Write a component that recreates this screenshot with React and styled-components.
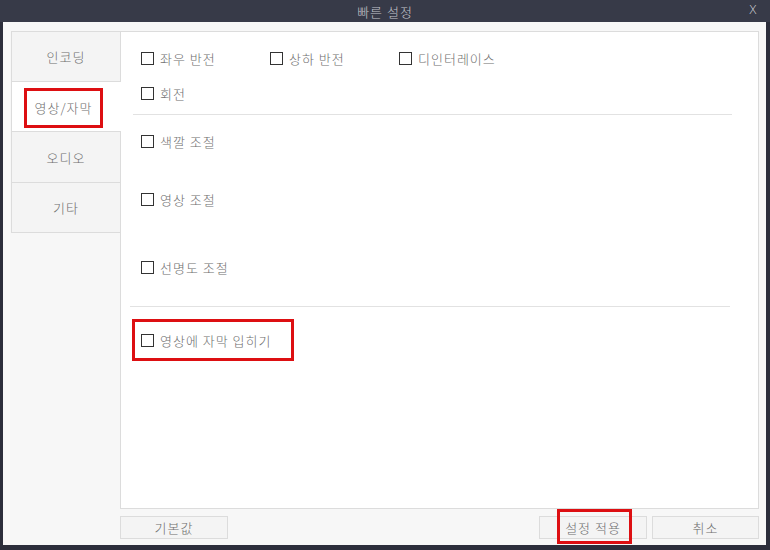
import React from "react";
import styled, { createGlobalStyle } from "styled-components";

const Global = createGlobalStyle`
  html, body { margin: 0; padding: 0; background: #2c2e3b; }
  body { font-family: "Noto Sans CJK KR", "Noto Sans", sans-serif; }
  * { box-sizing: border-box; }
`;

const Window = styled.div`
  width: 770px;
  height: 550px;
  background: #2c2e3b;
  display: flex;
  flex-direction: column;
`;

const TitleBar = styled.div`
  height: 22px;
  flex: none;
  background: #373a48;
  position: relative;
  display: flex;
  align-items: center;
  justify-content: center;
  color: #c4c5cc;
  font-size: 13px;
  font-weight: 300;
  letter-spacing: 1px;
`;

const CloseBtn = styled.span`
  position: absolute;
  right: 12px;
  top: 3px;
  font-family: "DejaVu Sans", sans-serif;
  font-size: 12px;
  color: #d6d7dc;
`;

const Body = styled.div`
  flex: 1;
  margin: 0 4px 5px 3px;
  background: #f7f7f7;
  padding: 9px 7px 6px 8px;
  display: flex;
  flex-direction: column;
`;

const Main = styled.div`
  height: 478px;
  display: flex;
`;

const Sidebar = styled.div`
  width: 109px;
  flex: none;
  display: flex;
  flex-direction: column;
`;

const Tab = styled.div`
  height: ${(p) => (p.$h ? p.$h : 50)}px;
  border: 1px solid #dcdcdc;
  border-bottom: ${(p) => (p.$last ? "1px solid #dcdcdc" : "none")};
  border-right: none;
  background: ${(p) => (p.$active ? "#ffffff" : "#f4f4f4")};
  margin-right: ${(p) => (p.$active ? "-1px" : "0")};
  position: relative;
  z-index: ${(p) => (p.$active ? 2 : 0)};
  display: flex;
  align-items: center;
  justify-content: center;
  color: #6e6e6e;
  font-size: 13px;
  font-weight: 300;
  letter-spacing: 1px;
`;

const RedTab = styled.div`
  width: 79px;
  height: 40px;
  border: 3px solid #dd0f12;
  margin-right: 6px;
  margin-top: 2px;
  display: flex;
  align-items: center;
  justify-content: center;
`;

const Panel = styled.div`
  flex: 1;
  background: #fff;
  border: 1px solid #dcdcdc;
  position: relative;
  z-index: 1;
  padding: 16px 0 0 20px;
  display: flex;
  flex-direction: column;
`;

const Row = styled.div`
  display: flex;
  align-items: center;
  height: 20px;
  margin-top: ${(p) => p.$mt || 0}px;
`;

const Check = styled.label`
  display: inline-flex;
  align-items: center;
  gap: 6px;
  width: ${(p) => (p.$w ? `${p.$w}px` : "auto")};
  color: #6e6e6e;
  font-size: 13px;
  font-weight: 300;
  letter-spacing: 1px;
  white-space: nowrap;
`;

const Box = styled.span`
  width: 13px;
  height: 13px;
  border: 1px solid #333;
  background: #fff;
  flex: none;
`;

const Sep = styled.div`
  height: 1px;
  background: #e2e2e2;
  margin: ${(p) => p.$mt}px ${(p) => p.$mr}px 0 ${(p) => p.$ml}px;
`;

const Highlight = styled.div`
  width: 162px;
  height: 42px;
  border: 3px solid #dd0f12;
  margin: 12px 0 0 -9px;
  padding-left: 6px;
  display: flex;
  align-items: center;
`;

const Buttons = styled.div`
  margin-top: 7px;
  height: 23px;
  display: flex;
  padding-left: 109px;
  gap: 5px;
`;

const Btn = styled.div`
  width: ${(p) => p.$w}px;
  height: 23px;
  border: 1px solid #dcdcdc;
  background: #f4f4f4;
  color: #6e6e6e;
  font-size: 13px;
  font-weight: 300;
  letter-spacing: 1px;
  display: flex;
  align-items: center;
  justify-content: center;
  position: relative;
`;

const Spacer = styled.div`
  flex: 1;
`;

const BtnMark = styled.span`
  position: absolute;
  top: -8px;
  bottom: -6px;
  left: 17px;
  right: 14px;
  border: 3px solid #dd0f12;
`;

function Option({ label, w }) {
  return (
    <Check $w={w}>
      <Box />
      {label}
    </Check>
  );
}

export default function App() {
  return (
    <>
      <Global />
      <Window>
        <TitleBar>
          빠른 설정
          <CloseBtn>X</CloseBtn>
        </TitleBar>
        <Body>
          <Main>
            <Sidebar>
              <Tab>인코딩</Tab>
              <Tab $active>
                <RedTab>영상/자막</RedTab>
              </Tab>
              <Tab $h={51}>오디오</Tab>
              <Tab $last $h={51}>기타</Tab>
            </Sidebar>
            <Panel>
              <Row>
                <Option label="좌우 반전" w={129} />
                <Option label="상하 반전" w={129} />
                <Option label="디인터레이스" />
              </Row>
              <Row $mt={15}>
                <Option label="회전" />
              </Row>
              <Sep $mt={11} $ml={-8} $mr={26} />
              <Row $mt={16}>
                <Option label="색깔 조절" />
              </Row>
              <Row $mt={38}>
                <Option label="영상 조절" />
              </Row>
              <Row $mt={48}>
                <Option label="선명도 조절" />
              </Row>
              <Sep $mt={29} $ml={-11} $mr={28} />
              <Highlight>
                <Option label="영상에 자막 입히기" />
              </Highlight>
            </Panel>
          </Main>
          <Buttons>
            <Btn $w={108}>기본값</Btn>
            <Spacer />
            <Btn $w={108}>
              설정 적용
              <BtnMark />
            </Btn>
            <Btn $w={107}>취소</Btn>
          </Buttons>
        </Body>
      </Window>
    </>
  );
}
